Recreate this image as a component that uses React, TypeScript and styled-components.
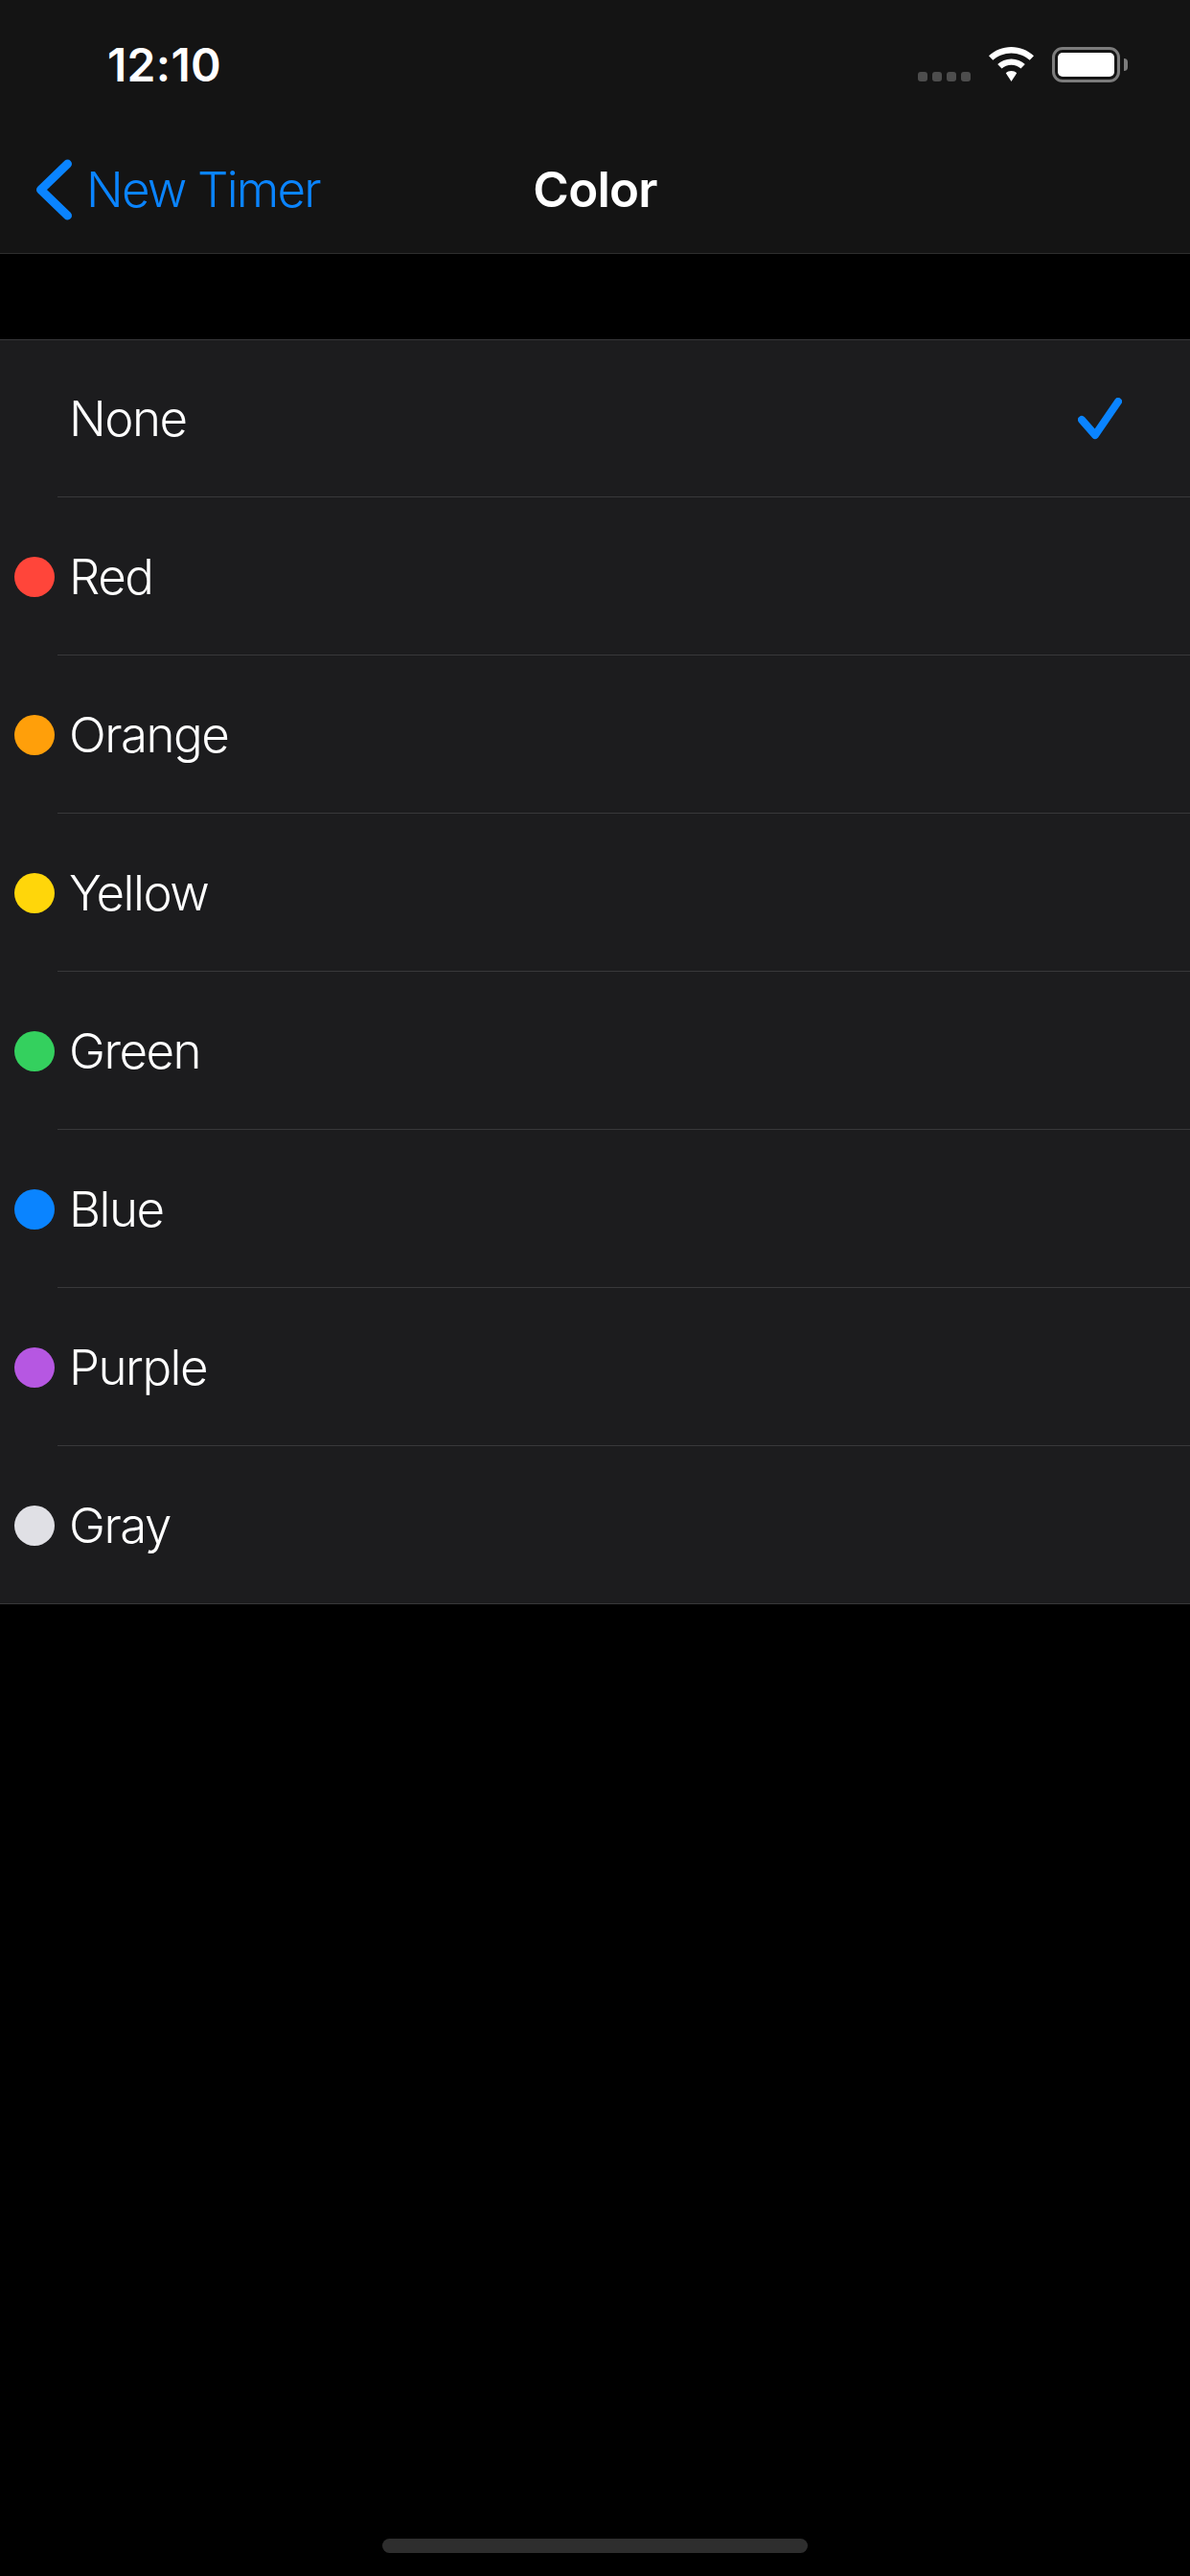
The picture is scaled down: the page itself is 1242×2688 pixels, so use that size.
import * as React from "react";
import styled, { createGlobalStyle } from "styled-components";

type ColorOption = { name: string; dot?: string; selected?: boolean };

const colors: ColorOption[] = [
  { name: "None", selected: true },
  { name: "Red", dot: "#ff453a" },
  { name: "Orange", dot: "#ff9f0a" },
  { name: "Yellow", dot: "#ffd60a" },
  { name: "Green", dot: "#34d05e" },
  { name: "Blue", dot: "#0a84ff" },
  { name: "Purple", dot: "#b657e2" },
  { name: "Gray", dot: "#e0e0e5" },
];

const App: React.FC = () => {
  return (
    <Page>
      <GlobalStyle />
      <Header>
        <StatusBar>
          <Clock>12:10</Clock>
          <StatusIcons>
            <SignalDots>
              <SignalDot />
              <SignalDot />
              <SignalDot />
              <SignalDot />
            </SignalDots>
            <svg width="47" height="36" viewBox="0 0 47 36">
              <path
                fill="#fff"
                d="M23.5 0C32.6 0 40.8 3.5 47 9.3L42.7 13.8C37.7 9.2 31 6.4 23.5 6.4S9.300 9.200 4.300 13.800L0 9.300C6.200 3.500 14.400 0 23.500 0Z"
              />
              <path
                fill="#fff"
                d="M23.500 12.500C29 12.500 34 14.600 37.800 18.100L33.500 22.600C30.800 20.200 27.300 18.800 23.500 18.800S16.200 20.200 13.500 22.600L9.200 18.100C13 14.600 18 12.500 23.500 12.500Z"
              />
              <path
                fill="#fff"
                d="M23.500 25C25.700 25 27.700 25.800 29.200 27.200L23.500 36L17.800 27.200C19.300 25.800 21.300 25 23.500 25Z"
              />
            </svg>
            <Battery>
              <BatteryFill />
            </Battery>
          </StatusIcons>
        </StatusBar>
        <NavBar>
          <BackLink>
            <svg width="42" height="66" viewBox="0 0 42 66">
              <path
                d="M34.500 6L6.500 33L34.500 60"
                fill="none"
                stroke="#0a84ff"
                strokeWidth="9"
                strokeLinecap="round"
                strokeLinejoin="round"
              />
            </svg>
            New Timer
          </BackLink>
          <Title>Color</Title>
        </NavBar>
      </Header>

      <List>
        {colors.map((color) => (
          <Row key={color.name}>
            <DotSlot>{color.dot && <Dot $color={color.dot} />}</DotSlot>
            <RowBody>
              <RowLabel>{color.name}</RowLabel>
              {color.selected && (
                <svg width="46" height="44" viewBox="0 0 46 44">
                  <path
                    d="M4 23L18 39L42 4"
                    fill="none"
                    stroke="#0a84ff"
                    strokeWidth="8"
                    strokeLinecap="round"
                    strokeLinejoin="round"
                  />
                </svg>
              )}
            </RowBody>
          </Row>
        ))}
      </List>

      <HomeIndicator />
    </Page>
  );
};

const GlobalStyle = createGlobalStyle`
  html, body {
    margin: 0;
    padding: 0;
    background: #000;
  }
  body {
    font-family: Inter, "Liberation Sans", sans-serif;
    color: #fff;
  }
`;

const Page = styled.main`
  display: flex;
  flex-direction: column;
  width: 1242px;
  height: 2688px;
  background: #000;
  overflow: hidden;
`;

const Header = styled.header`
  background: #141414;
  border-bottom: 1px solid #2e2e2e;
`;

const StatusBar = styled.div`
  display: flex;
  align-items: flex-start;
  justify-content: space-between;
  height: 132px;
  padding: 50px 73px 0 112px;
  box-sizing: border-box;
`;

const Clock = styled.span`
  font-size: 48px;
  font-weight: 600;
  line-height: 36px;
  letter-spacing: 0.3px;
`;

const StatusIcons = styled.div`
  display: flex;
  align-items: flex-start;
  gap: 19px;
  margin-top: -1px;
`;

const SignalDots = styled.div`
  display: flex;
  gap: 5px;
  margin-top: 26px;
`;

const SignalDot = styled.span`
  width: 10px;
  height: 10px;
  border-radius: 3px;
  background: #4d4d4d;
`;

const Battery = styled.div`
  position: relative;
  width: 71px;
  height: 37px;
  padding: 3px;
  box-sizing: border-box;
  border: 3px solid #7c7c7c;
  border-radius: 11px;

  &::after {
    content: "";
    position: absolute;
    top: 9px;
    right: -11px;
    width: 4px;
    height: 13px;
    border-radius: 0 7px 7px 0;
    background: #7c7c7c;
  }
`;

const BatteryFill = styled.div`
  height: 100%;
  border-radius: 5px;
  background: #fff;
`;

const NavBar = styled.nav`
  display: grid;
  grid-template-columns: 1fr auto 1fr;
  align-items: center;
  height: 132px;
  padding-bottom: 1px;
  box-sizing: border-box;
`;

const BackLink = styled.a`
  display: flex;
  align-items: center;
  gap: 12px;
  padding-left: 36px;
  color: #0a84ff;
  font-size: 51px;
  font-weight: 360;
  letter-spacing: -1.8px;
`;

const Title = styled.h1`
  margin: 0;
  font-size: 51px;
  font-weight: 600;
  letter-spacing: -0.8px;
`;

const List = styled.section`
  margin-top: 89px;
  background: #1c1c1e;
  border-top: 1px solid #38383a;
  border-bottom: 1px solid #38383a;
`;

const Row = styled.div`
  display: flex;
  height: 165px;

  &:first-child {
    height: 163px;
  }
`;

const DotSlot = styled.div`
  display: flex;
  align-items: center;
  justify-content: flex-end;
  width: 60px;
  padding-right: 3px;
  box-sizing: border-box;
`;

const Dot = styled.span<{ $color: string }>`
  width: 42px;
  height: 42px;
  margin-top: 3px;
  border-radius: 50%;
  background: ${(props) => props.$color};
`;

const RowBody = styled.div`
  display: flex;
  flex: 1;
  align-items: center;
  justify-content: space-between;
  padding: 0 71px 0 12px;

  ${Row} + ${Row} & {
    border-top: 1px solid #38383a;
  }
`;

const RowLabel = styled.span`
  font-size: 51px;
  font-weight: 360;
  letter-spacing: -1.5px;
`;

const HomeIndicator = styled.div`
  align-self: center;
  width: 444px;
  height: 15px;
  margin-top: auto;
  margin-bottom: 24px;
  border-radius: 8px;
  background: #2e2e2e;
`;

export default App;
